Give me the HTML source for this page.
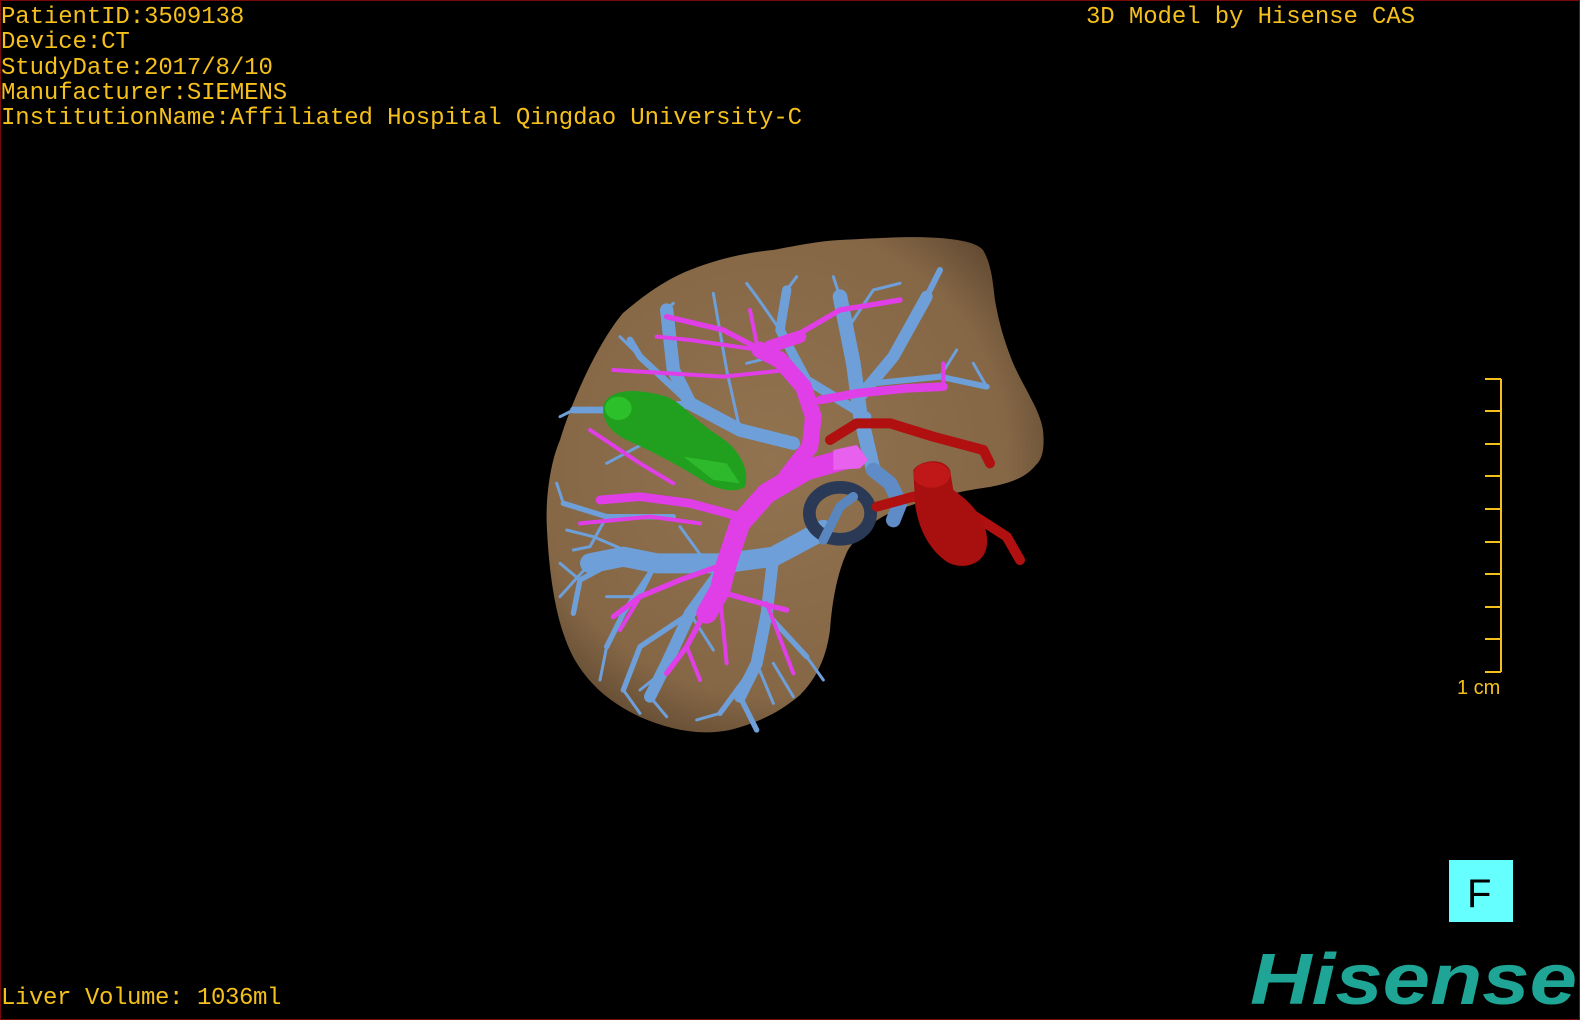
<!DOCTYPE html>
<html><head><meta charset="utf-8"><style>
html,body{margin:0;padding:0;background:#000;}
body{width:1580px;height:1020px;position:relative;overflow:hidden;}
.frame{position:absolute;left:0;top:0;width:1578px;height:1018px;border:1px solid #7a0a0a;}
.t{position:absolute;font-family:"Liberation Mono",monospace;font-size:24px;letter-spacing:-0.1px;color:#f5c01c;white-space:pre;line-height:25.3px;}
</style></head><body>
<div class="frame"></div>
<div class="t" style="left:1px;top:5px">PatientID:3509138
Device:CT
StudyDate:2017/8/10
Manufacturer:SIEMENS
InstitutionName:Affiliated Hospital Qingdao University-C</div>
<div class="t" style="left:1086px;top:5px">3D Model by Hisense CAS</div>
<div class="t" style="left:1px;top:986px;letter-spacing:-0.4px">Liver Volume: 1036ml</div>

<svg width="1580" height="1020" style="position:absolute;left:0;top:0">
<defs>
<radialGradient id="lv" cx="0.45" cy="0.45" r="0.6">
<stop offset="0" stop-color="#917350"/><stop offset="0.8" stop-color="#856746"/><stop offset="1" stop-color="#644c33"/>
</radialGradient>
</defs>
<path fill="url(#lv)" d="M547,530 C545,500 550,463 560,440 C573,397 600,340 623,313 C650,290 670,278 690,270 C720,258 750,252 773,250 C800,245 820,241 840,240 C880,238 910,236 940,238 C965,240 978,244 983,250 C992,265 993,285 995,300 C1000,330 1008,350 1013,363 C1025,390 1040,410 1043,430 C1045,450 1042,460 1035,466 C1025,478 1010,483 990,487 C967,490 930,497 890,513 C870,522 857,537 848,550 C838,570 832,600 830,630 C826,660 815,680 800,695 C780,712 760,722 730,730 C700,736 670,730 640,717 C615,705 595,690 580,668 C560,640 550,590 547,530 Z"/>
<g transform="translate(540,230) scale(0.33333)" fill="none" stroke-linecap="round" stroke-linejoin="round">
<g stroke="#6e9fd8">
<path stroke-width="60" d="M850,900 L700,980 L550,1000 L350,1000 L250,980 L150,1000"/>
<path stroke-width="36" d="M700,980 L680,1150 L650,1300 L600,1400 M560,1000 L450,1150 L380,1300 L330,1400"/>
<path stroke-width="44" d="M1000,720 L960,550 L940,400 L920,300 L900,200"/>
<path stroke-width="36" d="M960,500 L1060,380 L1160,200"/>
<path stroke-width="28" d="M980,560 L800,450 L720,300 L740,180"/>
<path stroke-width="18" d="M1000,460 L1200,440 L1340,470 M1160,200 L1200,120"/>
<path stroke-width="40" d="M760,640 L600,600 L450,520 L400,420 L380,240"/>
<path stroke-width="20" d="M450,520 L300,380 L270,330 M450,520 L250,540 L100,540"/>
<path stroke-width="16" d="M400,860 L200,860 L70,820 M250,980 L120,1050 L100,1150 M350,1000 L250,1150 L200,1250 M680,1150 L800,1280 M650,1300 L540,1450 M450,1150 L300,1250 L250,1380 M600,1400 L650,1500"/>
<path stroke-width="9" d="M900,200 L880,140 M920,300 L1000,180 L1080,160 M740,180 L770,140 M720,300 L650,200 L620,160 M380,240 L400,220 M300,380 L240,320 M100,540 L60,560 M70,820 L50,760 M120,1050 L60,1000 M200,1250 L180,1350 M250,1380 L300,1450 M330,1400 L380,1460 M540,1450 L470,1470 M800,1280 L850,1350 M1340,470 L1300,400 M1200,440 L1250,360 M600,600 L560,420 L520,190 M450,520 L350,620 L200,700 M300,980 L160,920 L80,900 M500,1000 L420,890 M150,1000 L60,1100 M400,1300 L300,1380 M700,1300 L760,1400 M800,450 L700,380 L620,400 M1060,380 L1100,300 M200,860 L150,950 L100,960 M350,1000 L300,1100 L200,1100 M650,1300 L700,1420 M450,1150 L520,1260"/>
</g>
<ellipse cx="900" cy="850" rx="92" ry="78" stroke="#2a3a56" stroke-width="38"/>
<path stroke="#5f8cc6" stroke-width="44" d="M1000,720 L1050,760 L1080,820 L1060,870"/>
<path stroke="#5a86bf" stroke-width="28" d="M850,930 L900,830 L940,800"/>
<g stroke="#e03ee6">
<path stroke-width="62" d="M940,680 L800,720 L680,790 L600,880 L560,1000 L540,1080 L500,1150"/>
<path stroke-width="50" d="M740,740 L810,650 L820,560 L790,470 L720,390 L660,360"/>
<path stroke-width="38" d="M690,350 L780,320"/>
<path stroke-width="26" d="M840,510 L950,490 L1100,475 L1210,470 M600,860 L450,820 L300,800 L180,810"/>
<path stroke-width="16" d="M720,390 L550,300 L380,260 M780,310 L900,240 L1080,210 M560,1000 L420,1050 L300,1100 L220,1160 M520,1080 L700,1130 L740,1140 M520,1100 L440,1250 L380,1330"/>
<path stroke-width="12" d="M660,360 L450,330 L350,320 M650,340 L630,240 M740,420 L550,440 L220,420 M540,1100 L560,1300 M680,1120 L760,1330 M480,880 L330,860 L120,880 M400,760 L300,700 L150,600 M1210,470 L1210,400 M300,1100 L240,1200 M440,1250 L480,1350"/>
</g>
<path fill="#e860ee" d="M880,660 L950,645 L985,690 L960,715 L880,720 Z"/>
<path fill="#20a01e" d="M190,530 C200,480 280,470 380,500 C430,520 460,570 540,620 C600,660 630,720 615,770 C590,790 540,780 500,760 C440,720 350,670 260,630 C210,605 185,570 190,530 Z"/>
<ellipse cx="235" cy="535" rx="40" ry="35" fill="#2cc02a"/>
<path fill="#35c230" opacity="0.7" d="M430,680 L560,700 L600,760 L520,750 Z"/>
<g stroke="#b01010">
<path stroke-width="30" d="M870,630 L950,580 L1050,580 L1180,620 L1330,660 L1350,700"/>
<path stroke-width="30" d="M1010,830 L1120,800 L1260,830 L1400,920 L1440,990"/>
</g>
<path fill="#a80f0f" d="M1120,720 C1140,690 1210,680 1230,720 L1240,780 C1300,820 1350,880 1340,950 C1330,1010 1260,1020 1220,995 C1170,960 1135,900 1125,820 Z"/>
<ellipse cx="1175" cy="735" rx="55" ry="38" fill="#c01818"/>
</g>
<g stroke="#f5c01c" stroke-width="2" fill="none">
<path d="M1501,379 L1501,672"/>
<path d="M1485,379H1501M1485,411H1501M1485,444H1501M1485,476H1501M1485,509H1501M1485,542H1501M1485,574H1501M1485,607H1501M1485,639H1501M1485,672H1501"/>
</g>
<text x="1457" y="694" font-family="Liberation Sans,sans-serif" font-size="20" fill="#f5c01c">1 cm</text>
<rect x="1449" y="860" width="64" height="62" fill="#66ffff"/>
<text x="1467" y="907" font-family="Liberation Sans,sans-serif" font-size="40" fill="#000">F</text>
<text x="1250" y="1004" font-family="Liberation Sans,sans-serif" font-weight="bold" font-style="italic" font-size="72" fill="#1ea596" textLength="327" lengthAdjust="spacingAndGlyphs">Hisense</text>
</svg>
</body></html>
